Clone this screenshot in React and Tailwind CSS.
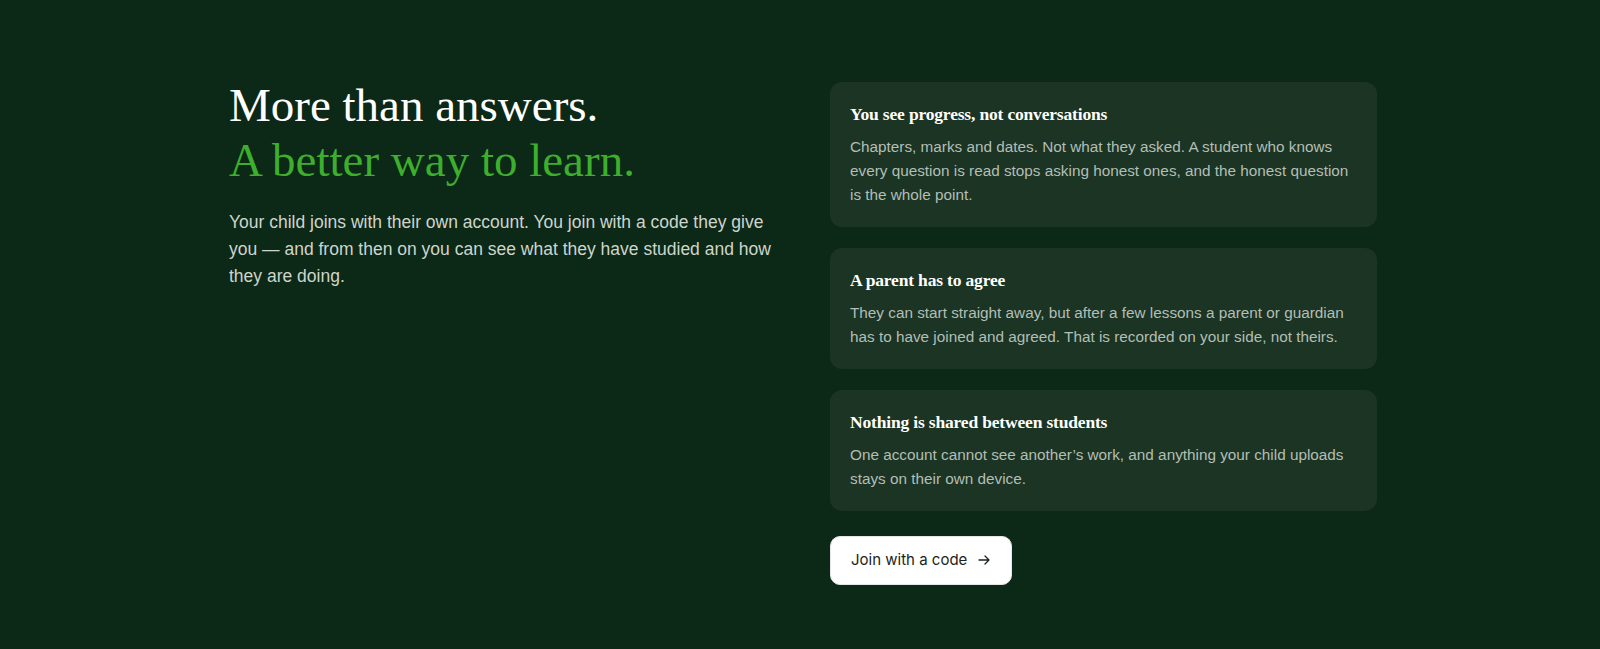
import React from "react";

const cards = [
  {
    title: "You see progress, not conversations",
    body: "Chapters, marks and dates. Not what they asked. A student who knows every question is read stops asking honest ones, and the honest question is the whole point.",
  },
  {
    title: "A parent has to agree",
    body: "They can start straight away, but after a few lessons a parent or guardian has to have joined and agreed. That is recorded on your side, not theirs.",
  },
  {
    title: "Nothing is shared between students",
    body: "One account cannot see another\u2019s work, and anything your child uploads stays on their own device.",
  },
];

export default function App() {
  return (
    <div className="min-h-screen w-full bg-[#0c2816]">
      <div className="pl-[229px] pr-[223px] pt-[78px] pb-16">
        <div className="grid grid-cols-[545px_547px] gap-x-[56px] items-start">
          <div>
            <h2
              className="text-[47px] leading-[1.18] font-normal text-white"
              style={{ fontFamily: '"Liberation Serif", "Times New Roman", serif' }}
            >
              More than answers.
              <br />
              <span className="text-[#3dae2d]">A better way to learn.</span>
            </h2>
            <p
              className="mt-[20px] text-[17.5px] leading-[1.55] text-[#cdd5cd]"
              style={{ fontFamily: '"Liberation Sans", Arial, sans-serif' }}
            >
              Your child joins with their own account. You join with a code they give you — and from then on you can see what they have studied and how they are doing.
            </p>
          </div>
          <div className="mt-[4px] flex flex-col">
            <div className="flex flex-col gap-[21.5px]">
              {cards.map((c) => (
                <div key={c.title} className="rounded-xl bg-[#1b3424] p-5">
                  <h3
                    className="text-[17.5px] leading-[24.5px] font-bold tracking-[-0.01em] text-white mb-2"
                    style={{ fontFamily: '"Liberation Serif", "Times New Roman", serif' }}
                  >
                    {c.title}
                  </h3>
                  <p
                    className="text-[15.3px] leading-[24px] text-[#b3beb5]"
                    style={{ fontFamily: '"Liberation Sans", Arial, sans-serif' }}
                  >
                    {c.body}
                  </p>
                </div>
              ))}
            </div>
            <div className="mt-[25px]">
              <button
                className="flex h-[49px] items-center gap-[11px] rounded-[10px] border border-[#e6e6e6] bg-white pl-5 pr-[21px] text-[15px] text-[#1c2420]"
                style={{ fontFamily: 'Inter, "Noto Sans", sans-serif' }}
              >
                <span>Join with a code</span>
                <svg width="12" height="10" viewBox="0 0 12 10" fill="none" stroke="currentColor" strokeWidth="1.3" strokeLinecap="round" strokeLinejoin="round">
                  <path d="M1 5h10M7 1l4 4-4 4" />
                </svg>
              </button>
            </div>
          </div>
        </div>
      </div>
    </div>
  );
}
